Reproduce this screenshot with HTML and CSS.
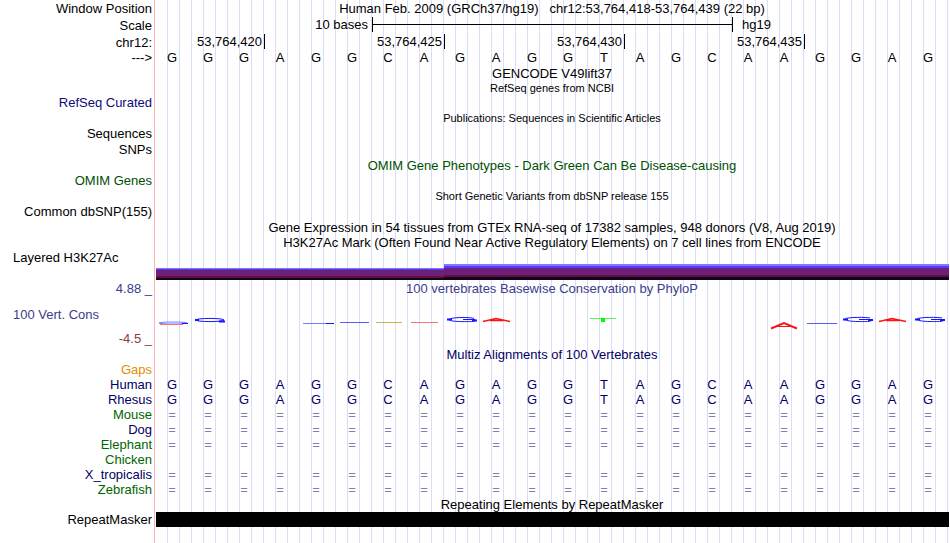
FILE: index.html
```html
<!DOCTYPE html>
<html lang="en">
<head>
    <meta charset="UTF-8">
    <meta name="viewport" content="width=device-width, initial-scale=1.0">
    <title>Human hg19 chr12:53,764,418-53,764,439</title>
    <link rel="stylesheet" href="styles.css">
</head>
<body>
    <main class="browser">
        <!-- Ruler -->
        <div class="row head"><div class="label">Window Position</div><div class="track title">Human Feb. 2009 (GRCh37/hg19)&nbsp;&nbsp; chr12:53,764,418-53,764,439 (22 bp)</div></div>
        <div class="row head">
            <div class="label">Scale</div>
            <div class="track cols">
                <span class="scale-size">10 bases</span>
                <span class="scale-bar"></span>
                <span class="scale-db">hg19</span>
            </div>
        </div>
        <div class="row tall">
            <div class="label">chr12:</div>
            <div class="track cols">
                <span class="tick first">53,764,420</span>
                <span class="tick">53,764,425</span>
                <span class="tick">53,764,430</span>
                <span class="tick">53,764,435</span>
            </div>
        </div>
        <div class="row"><div class="label">---&gt;</div><div class="track cols bases" data-seq="GGGAGGCAGAGGTAGCAAGGAG"></div></div>

        <!-- Genes and variants -->
        <div class="row tall"><div class="label"></div><div class="track title">GENCODE V49lift37</div></div>
        <div class="row short"><div class="label"></div><div class="track title small">RefSeq genes from NCBI</div></div>
        <div class="row"><div class="label refseq">RefSeq Curated</div><div class="track"></div></div>
        <div class="row tall"><div class="label"></div><div class="track title small">Publications: Sequences in Scientific Articles</div></div>
        <div class="row"><div class="label">Sequences</div><div class="track"></div></div>
        <div class="row tall"><div class="label">SNPs</div><div class="track"></div></div>
        <div class="row tall"><div class="label"></div><div class="track title omim">OMIM Gene Phenotypes - Dark Green Can Be Disease-causing</div></div>
        <div class="row"><div class="label omim">OMIM Genes</div><div class="track"></div></div>
        <div class="row tall"><div class="label"></div><div class="track title small">Short Genetic Variants from dbSNP release 155</div></div>
        <div class="row"><div class="label">Common dbSNP(155)</div><div class="track"></div></div>

        <!-- Expression and regulation -->
        <div class="row tall"><div class="label"></div><div class="track title">Gene Expression in 54 tissues from GTEx RNA-seq of 17382 samples, 948 donors (V8, Aug 2019)</div></div>
        <div class="row"><div class="label"></div><div class="track title">H3K27Ac Mark (Often Found Near Active Regulatory Elements) on 7 cell lines from ENCODE</div></div>
        <div class="row short"><div class="label left">Layered H3K27Ac</div><div class="track"></div></div>
        <div class="row tall">
            <div class="label"></div>
            <div class="track cols signal">
                <span class="low"></span>
                <span class="high"></span>
            </div>
        </div>

        <!-- Conservation -->
        <div class="row head"><div class="label cons">4.88 _</div><div class="track title cons">100 vertebrates Basewise Conservation by PhyloP</div></div>
        <div class="row wiggle">
            <div class="label left cons">100 Vert. Cons</div>
            <div class="track">
                <svg class="phylop" viewBox="0 0 792 34" preserveAspectRatio="none" aria-hidden="true">
                    <g fill="none" stroke="#1414ff">
                        <ellipse cx="17" cy="26" rx="14" ry="1" stroke="#7a7aff"/>
                        <path d="M4 27.5H27" stroke="#ff7070"/>
                        <path d="M26 26.5H32"/>
                        <ellipse cx="54" cy="23" rx="14" ry="1.6"/>
                        <path d="M39 23H43M63 24.5H69" stroke-width="2"/>
                        <path d="M147 26.5H171" stroke="#7a7aff"/>
                        <path d="M170 26.5H178"/>
                        <path d="M184 25.5H213" stroke="#5a5aff"/>
                        <path d="M651 26.5H681" stroke="#5a5aff"/>
                    </g>
                    <path d="M220 25.5H246" stroke="#c4b84a"/>
                    <path d="M255 25.5H282" stroke="#ff7070"/>
                    <g fill="none" stroke="#1414ff">
                        <path d="M318 21.5C315 20 295 20 293 22.5C292 25 316 25 319 24V22.5H307"/>
                        <path d="M291 22.5H296M316 23.5H321" stroke-width="2"/>
                        <path d="M714 21C711 20 691 20 689 22C688 25 712 25 715 24V22.5H703"/>
                        <path d="M687 22.5H692M712 23H717" stroke-width="2"/>
                        <path d="M786 21C783 20 763 20 761 22C760 25 784 25 787 24V22.5H775"/>
                        <path d="M759 22.5H764M784 23H789" stroke-width="2"/>
                    </g>
                    <g fill="none" stroke="#ff1414" stroke-width="1.5">
                        <path d="M327 24.5L340 21.5L354 24.5M334 23.5H347"/>
                        <path d="M723 24.5L736 21.5L750 24.5M730 23.5H743"/>
                        <path d="M615 31.5L628 26L641 31.5" stroke-width="2"/>
                        <path d="M620 29.5H636" stroke-width="1"/>
                    </g>
                    <path d="M434 21.5H460" stroke="#58f058"/>
                    <path d="M445 21H449V25H445Z" fill="#00ff00"/>
                </svg>
            </div>
        </div>
        <div class="row"><div class="label neg">-4.5 _</div><div class="track"></div></div>

        <!-- Alignments -->
        <div class="row tall"><div class="label"></div><div class="track title align">Multiz Alignments of 100 Vertebrates</div></div>
        <div class="row"><div class="label gaps">Gaps</div><div class="track"></div></div>
        <div class="row align"><div class="label">Human</div><div class="track cols bases" data-seq="GGGAGGCAGAGGTAGCAAGGAG"></div></div>
        <div class="row align"><div class="label">Rhesus</div><div class="track cols bases" data-seq="GGGAGGCAGAGGTAGCAAGGAG"></div></div>
        <div class="row"><div class="label species">Mouse</div><div class="track cols bases unaligned" data-seq="======================"></div></div>
        <div class="row align"><div class="label">Dog</div><div class="track cols bases unaligned" data-seq="======================"></div></div>
        <div class="row"><div class="label species">Elephant</div><div class="track cols bases unaligned" data-seq="======================"></div></div>
        <div class="row"><div class="label species">Chicken</div><div class="track"></div></div>
        <div class="row align"><div class="label">X_tropicalis</div><div class="track cols bases unaligned" data-seq="======================"></div></div>
        <div class="row"><div class="label species">Zebrafish</div><div class="track cols bases unaligned" data-seq="======================"></div></div>

        <!-- Repeats -->
        <div class="row"><div class="label"></div><div class="track title">Repeating Elements by RepeatMasker</div></div>
        <div class="row"><div class="label">RepeatMasker</div><div class="track"><div class="repeat"></div></div></div>
        <div class="row rest"><div class="label"></div><div class="track"></div></div>
    </main>

    <script>
        // one cell per base
        document.querySelectorAll('.bases').forEach(function (track) {
            for (const base of track.dataset.seq) {
                const cell = document.createElement('span');
                cell.textContent = base;
                track.appendChild(cell);
            }
        });
    </script>
</body>
</html>
```
FILE: styles.css
```css
* { box-sizing: border-box; }
body { margin: 0; background: #fff; color: #000; font-family: "Liberation Sans", Arial, sans-serif; font-size: 13px; line-height: 15px; }

.browser { display: flex; flex-direction: column; min-height: 100vh; padding-right: 2px; }
.row { display: flex; height: 15px; }
.row.short { height: 14px; }
.row.tall { height: 16px; }
.row.head { height: 17px; }
.row.wiggle { height: 34px; }
.row.rest { flex: 1; min-height: 15px; }

.label { display: flex; align-items: center; justify-content: flex-end; flex: none; width: 155px; margin-right: 1px; padding-right: 2px; border-right: 1px solid #ffb4b4; white-space: nowrap; }
.label.left { justify-content: flex-start; padding-left: 13px; }

/* guide lines, three to a base */
.track { flex: 1; min-width: 0; background: linear-gradient(to left, #dcdcf8 1px, transparent 1px) left top / calc(100% / 66) 100%; }
.title { display: flex; align-items: center; justify-content: center; white-space: nowrap; }
.small { font-size: 11px; }
.cols { display: grid; grid-template-columns: repeat(22, 1fr); }

.scale-size { grid-column: span 6; padding-right: 4px; text-align: right; }
.scale-bar { grid-column: span 10; height: 15px; margin-right: -1px; border: solid #000; border-width: 0 1px; background: linear-gradient(#000, #000) center / 100% 1px no-repeat; }
.scale-db { grid-column: span 6; padding-left: 10px; }
.tick { grid-column: span 5; height: 15px; margin-right: -1px; padding-right: 2px; border-right: 1px solid #000; text-align: right; }
.tick.first { grid-column: span 3; }
.bases span { padding-right: 4px; text-align: center; }

/* layered signal, drawn up from the bottom of its row */
.signal span { align-self: end; }
.low { grid-column: span 8; height: 12px; background: linear-gradient(#7878ff 1px, #5a3cdc 1px 2px, #6b207c 2px 8px, #690f37 8px 10px, #0f0523 10px); }
.high { grid-column: span 14; height: 16px; margin-right: -1px; background: linear-gradient(#7c7cff 2px, #6432ff 2px 4px, #6b207c 4px 11px, #690f37 11px 13px, #0f0523 13px); }
.phylop { display: block; width: 100%; height: 34px; }
.repeat { height: 15px; margin-right: -1px; background: #000; }

.refseq { color: #0c0c78; }
.omim { color: #005000; }
.cons { color: #3c3c8c; }
.neg { color: #8c3c3c; }
.gaps { color: #e68c00; }
.align { color: #000064; }
.species { color: #006400; }
.unaligned { color: #8080b4; }
```
